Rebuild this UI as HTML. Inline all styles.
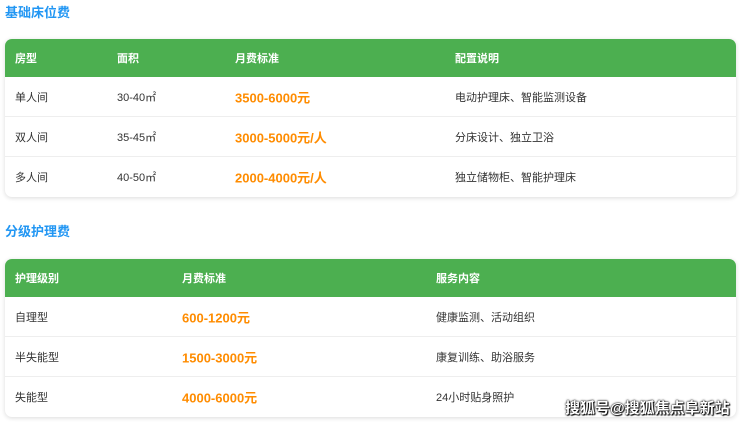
<!DOCTYPE html>
<html><head><meta charset="utf-8"><style>
body{margin:0;width:740px;height:422px;background:#fff;font-family:"Liberation Sans","Noto Sans CJK SC",sans-serif;position:relative;overflow:hidden}
*{box-sizing:border-box}
.t{position:absolute;left:5px;color:#2196f3;font-weight:bold;font-size:13px}
.tb{position:absolute;left:5px;width:731px;border-radius:7px;box-shadow:0 1px 5px rgba(0,0,0,.15);overflow:hidden;background:#fff}
.r{position:relative;height:40px;border-bottom:1px solid #eee;font-size:11px;color:#333}
.r:last-child{border-bottom:none}
.h{background:#4caf50;color:#fff;font-weight:bold;height:38px;border:none}
.r span{position:absolute;top:50%;transform:translateY(-50%);white-space:nowrap}
.o{color:#ff8c00;font-weight:bold;font-size:13px}
.wm{position:absolute;left:565px;top:397px;font-size:15px;color:#fff;font-weight:bold;text-shadow:0 0 2px #000,0 0 1px #000,1px 1px 1px #000}
</style></head><body>
<div class="t" style="top:2px">基础床位费</div>
<div class="tb" style="top:39px">
<div class="r h"><span style="left:10px">房型</span><span style="left:112px">面积</span><span style="left:230px">月费标准</span><span style="left:450px">配置说明</span></div>
<div class="r"><span style="left:10px">单人间</span><span style="left:112px">30-40㎡</span><span class="o" style="left:230px">3500-6000元</span><span style="left:450px">电动护理床、智能监测设备</span></div>
<div class="r"><span style="left:10px">双人间</span><span style="left:112px">35-45㎡</span><span class="o" style="left:230px">3000-5000元/人</span><span style="left:450px">分床设计、独立卫浴</span></div>
<div class="r"><span style="left:10px">多人间</span><span style="left:112px">40-50㎡</span><span class="o" style="left:230px">2000-4000元/人</span><span style="left:450px">独立储物柜、智能护理床</span></div>
</div>
<div class="t" style="top:221px">分级护理费</div>
<div class="tb" style="top:259px">
<div class="r h"><span style="left:10px">护理级别</span><span style="left:177px">月费标准</span><span style="left:431px">服务内容</span></div>
<div class="r"><span style="left:10px">自理型</span><span class="o" style="left:177px">600-1200元</span><span style="left:431px">健康监测、活动组织</span></div>
<div class="r"><span style="left:10px">半失能型</span><span class="o" style="left:177px">1500-3000元</span><span style="left:431px">康复训练、助浴服务</span></div>
<div class="r"><span style="left:10px">失能型</span><span class="o" style="left:177px">4000-6000元</span><span style="left:431px">24小时贴身照护</span></div>
</div>
<div class="wm">搜狐号@搜狐焦点阜新站</div>
</body></html>
